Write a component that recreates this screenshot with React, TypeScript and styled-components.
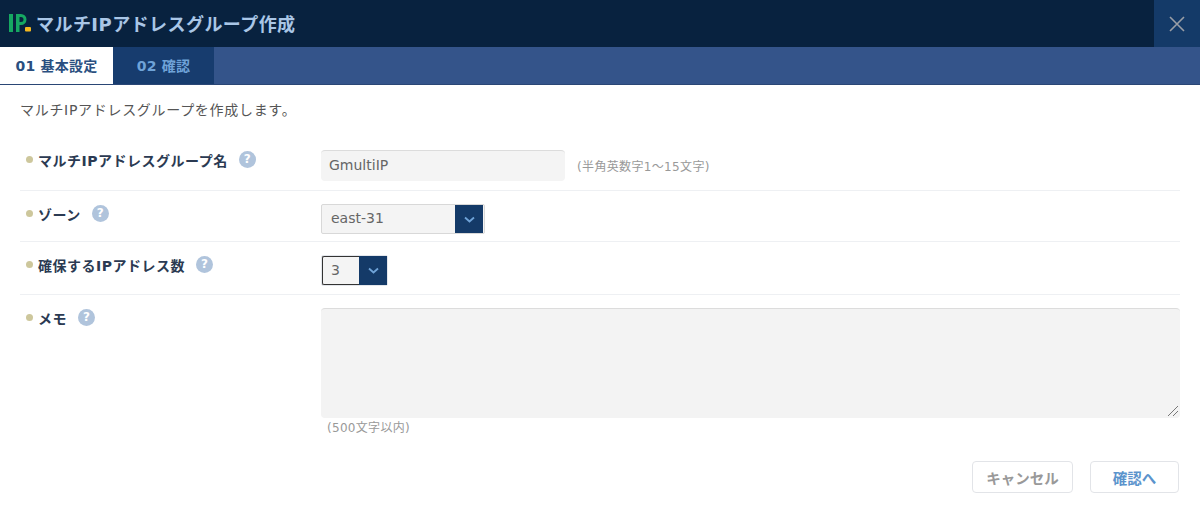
import type React from 'react';
import styled, { createGlobalStyle } from 'styled-components';

const GlobalStyle = createGlobalStyle`
  html, body {
    margin: 0;
    padding: 0;
    background: #fff;
  }
  body {
    font-family: "DejaVu Sans", "Noto Sans CJK JP", sans-serif;
    color: #555;
  }
`;

const Dialog = styled.div`
  width: 1200px;
  height: 513px;
  overflow: hidden;
  display: flex;
  flex-direction: column;
`;

const Header = styled.header`
  height: 47px;
  background: #08223f;
  display: flex;
  align-items: stretch;
  justify-content: space-between;
`;

const TitleWrap = styled.div`
  display: flex;
  align-items: center;
  padding-left: 8px;
  gap: 4px;
  padding-bottom: 2px;
`;

const Title = styled.h1`
  margin: 0;
  font-size: 18px;
  font-weight: 700;
  color: #a9c6e6;
  letter-spacing: 0.45px;
`;

const CloseButton = styled.button`
  width: 46px;
  border: 0;
  padding: 0;
  background: #143a68;
  display: flex;
  align-items: center;
  justify-content: center;
`;

const TabBar = styled.nav`
  height: 37px;
  background: #34548a;
  display: flex;
  border-bottom: 1px solid #2a4675;
  box-sizing: content-box;
`;

const Tab = styled.div<{ $active?: boolean }>`
  width: ${(p) => (p.$active ? '113px' : '101px')};
  display: flex;
  align-items: center;
  justify-content: center;
  padding-bottom: 2px;
  box-sizing: border-box;
  font-size: 14px;
  font-weight: 700;
  letter-spacing: 0.2px;
  background: ${(p) => (p.$active ? '#fff' : '#173c6e')};
  color: ${(p) => (p.$active ? '#2a4f80' : '#6fa3d8')};
`;

const Body = styled.main`
  padding: 15px 20px 0 20px;
  display: flex;
  flex-direction: column;
`;

const Intro = styled.p`
  margin: 0 0 17px;
  font-size: 14px;
  line-height: 20px;
  color: #555;
  letter-spacing: 0.7px;
`;

const Row = styled.div<{ $height: number; $last?: boolean }>`
  display: flex;
  align-items: flex-start;
  padding-top: 13px;
  height: ${(p) => p.$height}px;
  border-bottom: ${(p) => (p.$last ? '0' : '1px solid #eef0f3')};
  box-sizing: content-box;
`;

const LabelCell = styled.div`
  width: 301px;
  flex: none;
  display: flex;
  align-items: center;
  gap: 5px;
  height: 19px;
  padding-left: 6px;
  box-sizing: border-box;
`;

const Dot = styled.span`
  width: 7px;
  height: 7px;
  border-radius: 50%;
  background: #cdc79c;
  flex: none;
`;

const Label = styled.span`
  font-size: 14px;
  font-weight: 700;
  color: #2b3a52;
  letter-spacing: 0.5px;
`;

const Help = styled.span`
  width: 17px;
  height: 17px;
  border-radius: 50%;
  background: #b0c4dc;
  color: #fff;
  font-size: 12px;
  font-weight: 700;
  line-height: 17px;
  text-align: center;
  margin-left: 6px;
  flex: none;
`;

const FieldCell = styled.div`
  display: flex;
  align-items: center;
  gap: 12px;
  flex: 1;
  min-width: 0;
`;

const TextInput = styled.div`
  width: 244px;
  height: 31px;
  background: #f4f4f4;
  border-top: 1px solid #dcdcdc;
  border-radius: 4px;
  box-sizing: border-box;
  padding-left: 8px;
  font-size: 14px;
  line-height: 28px;
  color: #666;
`;

const Hint = styled.span`
  font-size: 12px;
  color: #999;
  letter-spacing: 0.35px;
`;

const SelectBox = styled.div<{ $width: number; $focused?: boolean }>`
  width: ${(p) => p.$width}px;
  height: ${(p) => (p.$focused ? '31px' : '30px')};
  display: flex;
  box-sizing: border-box;
  background: #f4f4f4;
  border-radius: 2px;
  border: 1px solid ${(p) => (p.$focused ? '#e4e7ec' : '#d8d8d8')};
`;

const SelectValue = styled.div<{ $focused?: boolean }>`
  flex: 1;
  font-size: 14px;
  line-height: 27px;
  padding-left: ${(p) => (p.$focused ? '8px' : '9px')};
  color: #666;
  border: ${(p) => (p.$focused ? '1px solid #333' : '0')};
  border-right: 0;
  border-radius: 2px 0 0 2px;
`;

const SelectArrow = styled.div<{ $focused?: boolean }>`
  width: 28px;
  margin-right: ${(p) => (p.$focused ? '0' : '1px')};
  background: #143a68;
  display: flex;
  align-items: center;
  justify-content: center;
  flex: none;
`;

const MemoWrap = styled.div`
  flex: 1;
  min-width: 0;
`;

const MemoArea = styled.div`
  height: 110px;
  background: #f3f3f3;
  border-top: 1px solid #dcdcdc;
  border-radius: 4px;
  box-sizing: border-box;
  position: relative;
`;

const Grip = styled.svg`
  position: absolute;
  right: 1px;
  bottom: 1px;
`;

const MemoHint = styled.div`
  font-size: 12px;
  color: #999;
  line-height: 20px;
  padding-left: 6px;
  letter-spacing: 0.3px;
`;

const Footer = styled.div`
  display: flex;
  justify-content: flex-end;
  gap: 17px;
  margin-top: 13px;
  padding-right: 1px;
`;

const Button = styled.button<{ $primary?: boolean }>`
  height: 32px;
  width: ${(p) => (p.$primary ? '89px' : '101px')};
  background: #fff;
  border: 1px solid #e2e4e8;
  border-radius: 4px;
  font-family: inherit;
  font-size: 14.5px;
  font-weight: 700;
  padding: 0;
  color: ${(p) => (p.$primary ? '#5b93cc' : '#999')};
`;

const Chevron: React.FC = () => (
  <svg width="11" height="7" viewBox="0 0 11 7">
    <path d="M1 1.5 5.500 5.500 10 1.500" fill="none" stroke="#6fa3d8" strokeWidth="1.800" />
  </svg>
);

const Logo: React.FC = () => (
  <svg width="24" height="20" viewBox="0 0 24 20">
    <rect x="1" y="1" width="4" height="18" fill="#16a862" />
    <path
      d="M8 19V1h5a5.500 5.500 0 0 1 0 11H11.500v7ZM11.500 4v5h1.500a2.500 2.500 0 0 0 0-5Z"
      fill="#16a862"
      fillRule="evenodd"
    />
    <rect x="17" y="14" width="6" height="4.500" rx="1" fill="#f5b81f" />
  </svg>
);

const App: React.FC = () => {
  return (
    <>
      <GlobalStyle />
      <Dialog>
        <Header>
          <TitleWrap>
            <Logo />
            <Title>マルチIPアドレスグループ作成</Title>
          </TitleWrap>
          <CloseButton aria-label="閉じる">
            <svg width="16" height="16" viewBox="0 0 16 16">
              <path d="M1 1 15 15M15 1 1 15" stroke="#9a9ea6" strokeWidth="1.600" fill="none" />
            </svg>
          </CloseButton>
        </Header>
        <TabBar>
          <Tab $active>01 基本設定</Tab>
          <Tab>02 確認</Tab>
        </TabBar>
        <Body>
          <Intro>マルチIPアドレスグループを作成します。</Intro>
          <Row $height={40}>
            <LabelCell>
              <Dot />
              <Label>マルチIPアドレスグループ名</Label>
              <Help>?</Help>
            </LabelCell>
            <FieldCell>
              <TextInput>GmultiIP</TextInput>
              <Hint>(半角英数字1〜15文字)</Hint>
            </FieldCell>
          </Row>
          <Row $height={37}>
            <LabelCell>
              <Dot />
              <Label>ゾーン</Label>
              <Help>?</Help>
            </LabelCell>
            <FieldCell>
              <SelectBox $width={164}>
                <SelectValue>east-31</SelectValue>
                <SelectArrow>
                  <Chevron />
                </SelectArrow>
              </SelectBox>
            </FieldCell>
          </Row>
          <Row $height={39}>
            <LabelCell>
              <Dot />
              <Label>確保するIPアドレス数</Label>
              <Help>?</Help>
            </LabelCell>
            <FieldCell>
              <SelectBox $width={67} $focused>
                <SelectValue $focused>3</SelectValue>
                <SelectArrow $focused>
                  <Chevron />
                </SelectArrow>
              </SelectBox>
            </FieldCell>
          </Row>
          <Row $height={140} $last>
            <LabelCell>
              <Dot />
              <Label>メモ</Label>
              <Help>?</Help>
            </LabelCell>
            <MemoWrap>
              <MemoArea>
                <Grip width="12" height="12" viewBox="0 0 12 12">
                  <path d="M1 11 11 1M6 11 11 6" stroke="#777" strokeWidth="1" fill="none" />
                </Grip>
              </MemoArea>
              <MemoHint>(500文字以内)</MemoHint>
            </MemoWrap>
          </Row>
          <Footer>
            <Button>キャンセル</Button>
            <Button $primary>確認へ</Button>
          </Footer>
        </Body>
      </Dialog>
    </>
  );
};

export default App;
